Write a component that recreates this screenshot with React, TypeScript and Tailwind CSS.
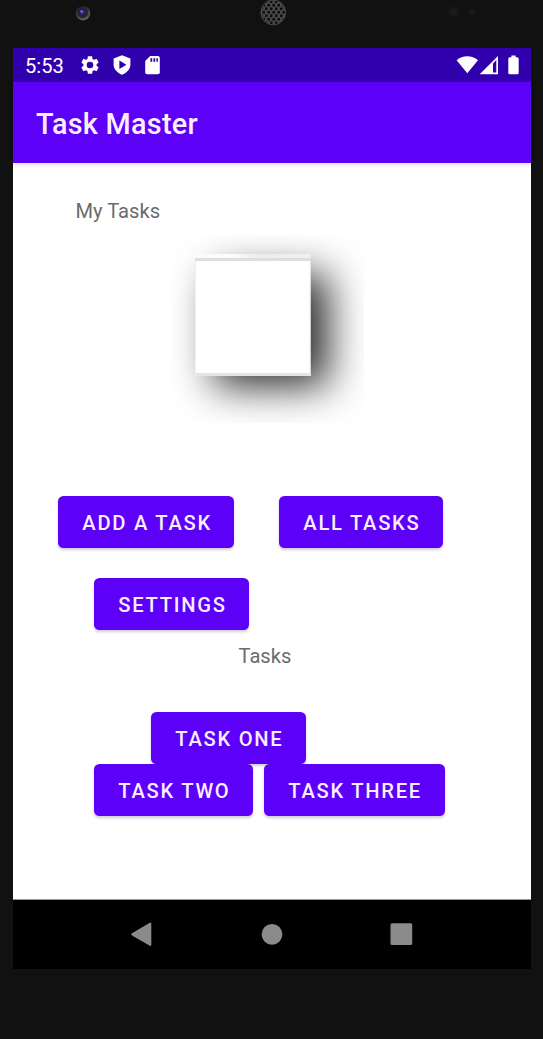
import type { ReactNode } from 'react';

function TaskButton({ className, children }: { className: string; children: ReactNode }) {
  return (
    <button
      className={`flex h-[52px] shrink-0 items-center rounded-[5.5px] bg-[#5c00f8] pl-[24.3px] pt-[2px] text-[20.15px] font-medium leading-none tracking-[1.75px] whitespace-nowrap text-[#fbefff] shadow-[0_2px_3px_rgba(40,20,70,0.22)] ${className}`}
    >
      {children}
    </button>
  );
}

function DeviceTop() {
  return (
    <svg className="block h-[48px] w-full shrink-0" viewBox="0 0 543 48" aria-hidden="true">
      <defs>
        <radialGradient id="lens" cx="0.45" cy="0.4" r="0.6">
          <stop offset="0" stopColor="#4a3ac0" />
          <stop offset="0.38" stopColor="#211d48" />
          <stop offset="0.6" stopColor="#26262c" />
          <stop offset="1" stopColor="#707074" />
        </radialGradient>
        <pattern id="mesh" width="5" height="7" patternUnits="userSpaceOnUse">
          <rect width="5" height="7" fill="#484848" />
          <circle cx="1.25" cy="1.75" r="1.45" fill="#0e0e0e" />
          <circle cx="3.75" cy="5.25" r="1.45" fill="#0e0e0e" />
        </pattern>
      </defs>
      <circle cx="83" cy="13.3" r="7.1" fill="url(#lens)" />
      <circle cx="81.5" cy="11.5" r="1" fill="#8d86d5" />
      <circle cx="273.3" cy="12.4" r="12.4" fill="url(#mesh)" stroke="#484848" strokeWidth="1" />
      <circle cx="453.5" cy="11.5" r="5" fill="#191717" />
      <circle cx="454" cy="12" r="1.8" fill="#211c1c" />
      <circle cx="472" cy="11.5" r="3" fill="#1c1919" />
    </svg>
  );
}

function StatusBar() {
  return (
    <div className="flex h-[34px] shrink-0 items-center bg-[#3100ad] pl-[12px] text-white">
      <span className="w-[54px] pt-[2px] text-[20.15px] leading-none">5:53</span>
      <svg className="size-[22px]" viewBox="0 0 24 24" fill="#fff">
        <path d="M19.14 12.94c.04-.3.06-.61.06-.94s-.02-.64-.07-.94l2.03-1.58a.49.49 0 0 0 .12-.61l-1.92-3.32a.49.49 0 0 0-.59-.22l-2.39.96c-.5-.38-1.03-.7-1.62-.94l-.36-2.54a.48.48 0 0 0-.48-.41h-3.84a.47.47 0 0 0-.47.41l-.36 2.54c-.59.24-1.13.57-1.62.94l-2.39-.96a.48.48 0 0 0-.59.22L2.74 8.87c-.12.21-.08.47.12.61l2.03 1.58c-.05.3-.09.63-.09.94s.02.64.07.94l-2.03 1.58a.49.49 0 0 0-.12.61l1.92 3.32c.12.22.37.29.59.22l2.39-.96c.5.38 1.03.7 1.62.94l.36 2.54c.05.24.24.41.48.41h3.84c.24 0 .44-.17.47-.41l.36-2.54c.59-.24 1.13-.56 1.62-.94l2.39.96c.22.08.47 0 .59-.22l1.92-3.32a.47.47 0 0 0-.12-.61zM12 15.6a3.6 3.6 0 1 1 0-7.2 3.6 3.6 0 0 1 0 7.2z" />
      </svg>
      <svg className="ml-[9.5px] h-[22px] w-[22px]" viewBox="0 0 22 22">
        <path d="M11 1.2L2.6 4.4v6.2c0 4.6 3.4 8.3 8.4 10.2 5-1.9 8.4-5.6 8.4-10.2V4.4z" fill="#fff" />
        <path d="M8.4 6.5v8.4l7-4.2z" fill="#3100ad" />
      </svg>
      <svg className="ml-[9.5px] h-[22px] w-[22px]" viewBox="0 0 22 22">
        <path d="M8.2 2h7.6q2 0 2 2v14.3q0 2-2 2H5.2q-2 0-2-2V7.1z" fill="#fff" />
        <path d="M8.4 4.2h1.8v3.6H8.4zM11.4 4.2h1.8v3.6h-1.8zM14.4 4.2h1.5v3.6h-1.5z" fill="#3100ad" />
      </svg>
      <svg className="ml-auto h-[22px] w-[76px]" viewBox="0 0 76 22" fill="#fff">
        <path d="M1.6 6.3C7.5.9 17 .9 23 6.3L12.3 19.3z" />
        <path fillRule="evenodd" d="M43 2v18.3H24.7zM41.3 6.1L38 9.4v9.2h3.3z" />
        <path d="M56.4 1.5h4.2v1.7h1.6q1.5 0 1.5 1.5v14.1q0 1.5-1.5 1.5h-7.4q-1.5 0-1.5-1.5V4.7q0-1.5 1.5-1.5h1.6z" />
      </svg>
    </div>
  );
}

function ShadowPicture() {
  return (
    <svg className="ml-[157px] mt-[13px] block h-[190px] w-[198px] shrink-0" viewBox="170 235 198 190" aria-hidden="true">
      <defs>
        <filter id="soft" x="-60%" y="-60%" width="220%" height="220%" colorInterpolationFilters="sRGB">
          <feGaussianBlur stdDeviation="20" />
        </filter>
        <linearGradient id="edge" x1="0" x2="1" y1="0" y2="0">
          <stop offset="0" stopColor="#fafafa" />
          <stop offset="0.3" stopColor="#fdfdfd" />
          <stop offset="0.55" stopColor="#ececec" />
          <stop offset="1" stopColor="#f0f0f0" />
        </linearGradient>
        <clipPath id="frame">
          <rect x="172" y="236" width="192" height="187" />
        </clipPath>
      </defs>
      <g clipPath="url(#frame)">
        <rect x="214" y="274" width="114" height="112" fill="#000" fillOpacity="0.84" filter="url(#soft)" />
      </g>
      <rect x="195" y="254" width="115.5" height="4" fill="url(#edge)" />
      <rect x="195" y="258" width="115.5" height="3" fill="#dedede" />
      <rect x="195" y="261" width="115.5" height="115" fill="#fff" />
      <rect x="195" y="373" width="115.5" height="3" fill="#e4e6e6" />
      <path d="M195.5 261v115M310 261v115" stroke="#f0f0f0" />
    </svg>
  );
}

export default function App() {
  return (
    <div className="flex h-[1039px] w-[543px] flex-col overflow-hidden bg-[#111111] font-[Roboto,sans-serif]">
      <DeviceTop />
      <div className="ml-[13px] flex h-[921px] w-[518px] shrink-0 flex-col bg-white">
        <StatusBar />
        <header className="flex h-[81px] shrink-0 items-center bg-[#5c00f8] pl-[23px] pt-[4px] shadow-[0_2px_4px_rgba(0,0,0,0.14)]">
          <h1 className="text-[28.8px] font-medium leading-none tracking-[0.27px] text-[#fbefff]">Task Master</h1>
        </header>
        <main className="flex min-h-0 flex-1 flex-col text-[#6b6b6b]">
          <p className="ml-[62.5px] mt-[36px] h-[23px] shrink-0 text-[20.15px] leading-[24px]">My Tasks</p>
          <ShadowPicture />
          <div className="ml-[45px] mt-[71.4px] flex shrink-0 gap-[45px]">
            <TaskButton className="w-[176px]">ADD A TASK</TaskButton>
            <TaskButton className="w-[164px]">ALL TASKS</TaskButton>
          </div>
          <TaskButton className="ml-[81px] mt-[29.6px] w-[155px]">SETTINGS</TaskButton>
          <p className="ml-[225.5px] mt-[14px] h-[24px] shrink-0 text-[20.15px] leading-[24px]">Tasks</p>
          <TaskButton className="ml-[138px] mt-[44.3px] w-[154.5px]">TASK ONE</TaskButton>
          <div className="ml-[81px] flex shrink-0 gap-[11px]">
            <TaskButton className="w-[159px]">TASK TWO</TaskButton>
            <TaskButton className="w-[180.5px]">TASK THREE</TaskButton>
          </div>
        </main>
        <nav className="h-[70px] shrink-0 border-t border-[#929a95] bg-black">
          <svg className="block h-[69px] w-[518px]" viewBox="13 900 518 69" fill="#8b8b8b">
            <path d="M132 933.2L149.8 922.8q1.5-.6 1.5 1v21q0 1.6-1.5 1L132 935.4q-1.6-1.1 0-2.2z" />
            <circle cx="272" cy="934.3" r="10.4" />
            <rect x="390.5" y="923.3" width="21.7" height="21.7" rx="1.5" />
          </svg>
        </nav>
      </div>
    </div>
  );
}
